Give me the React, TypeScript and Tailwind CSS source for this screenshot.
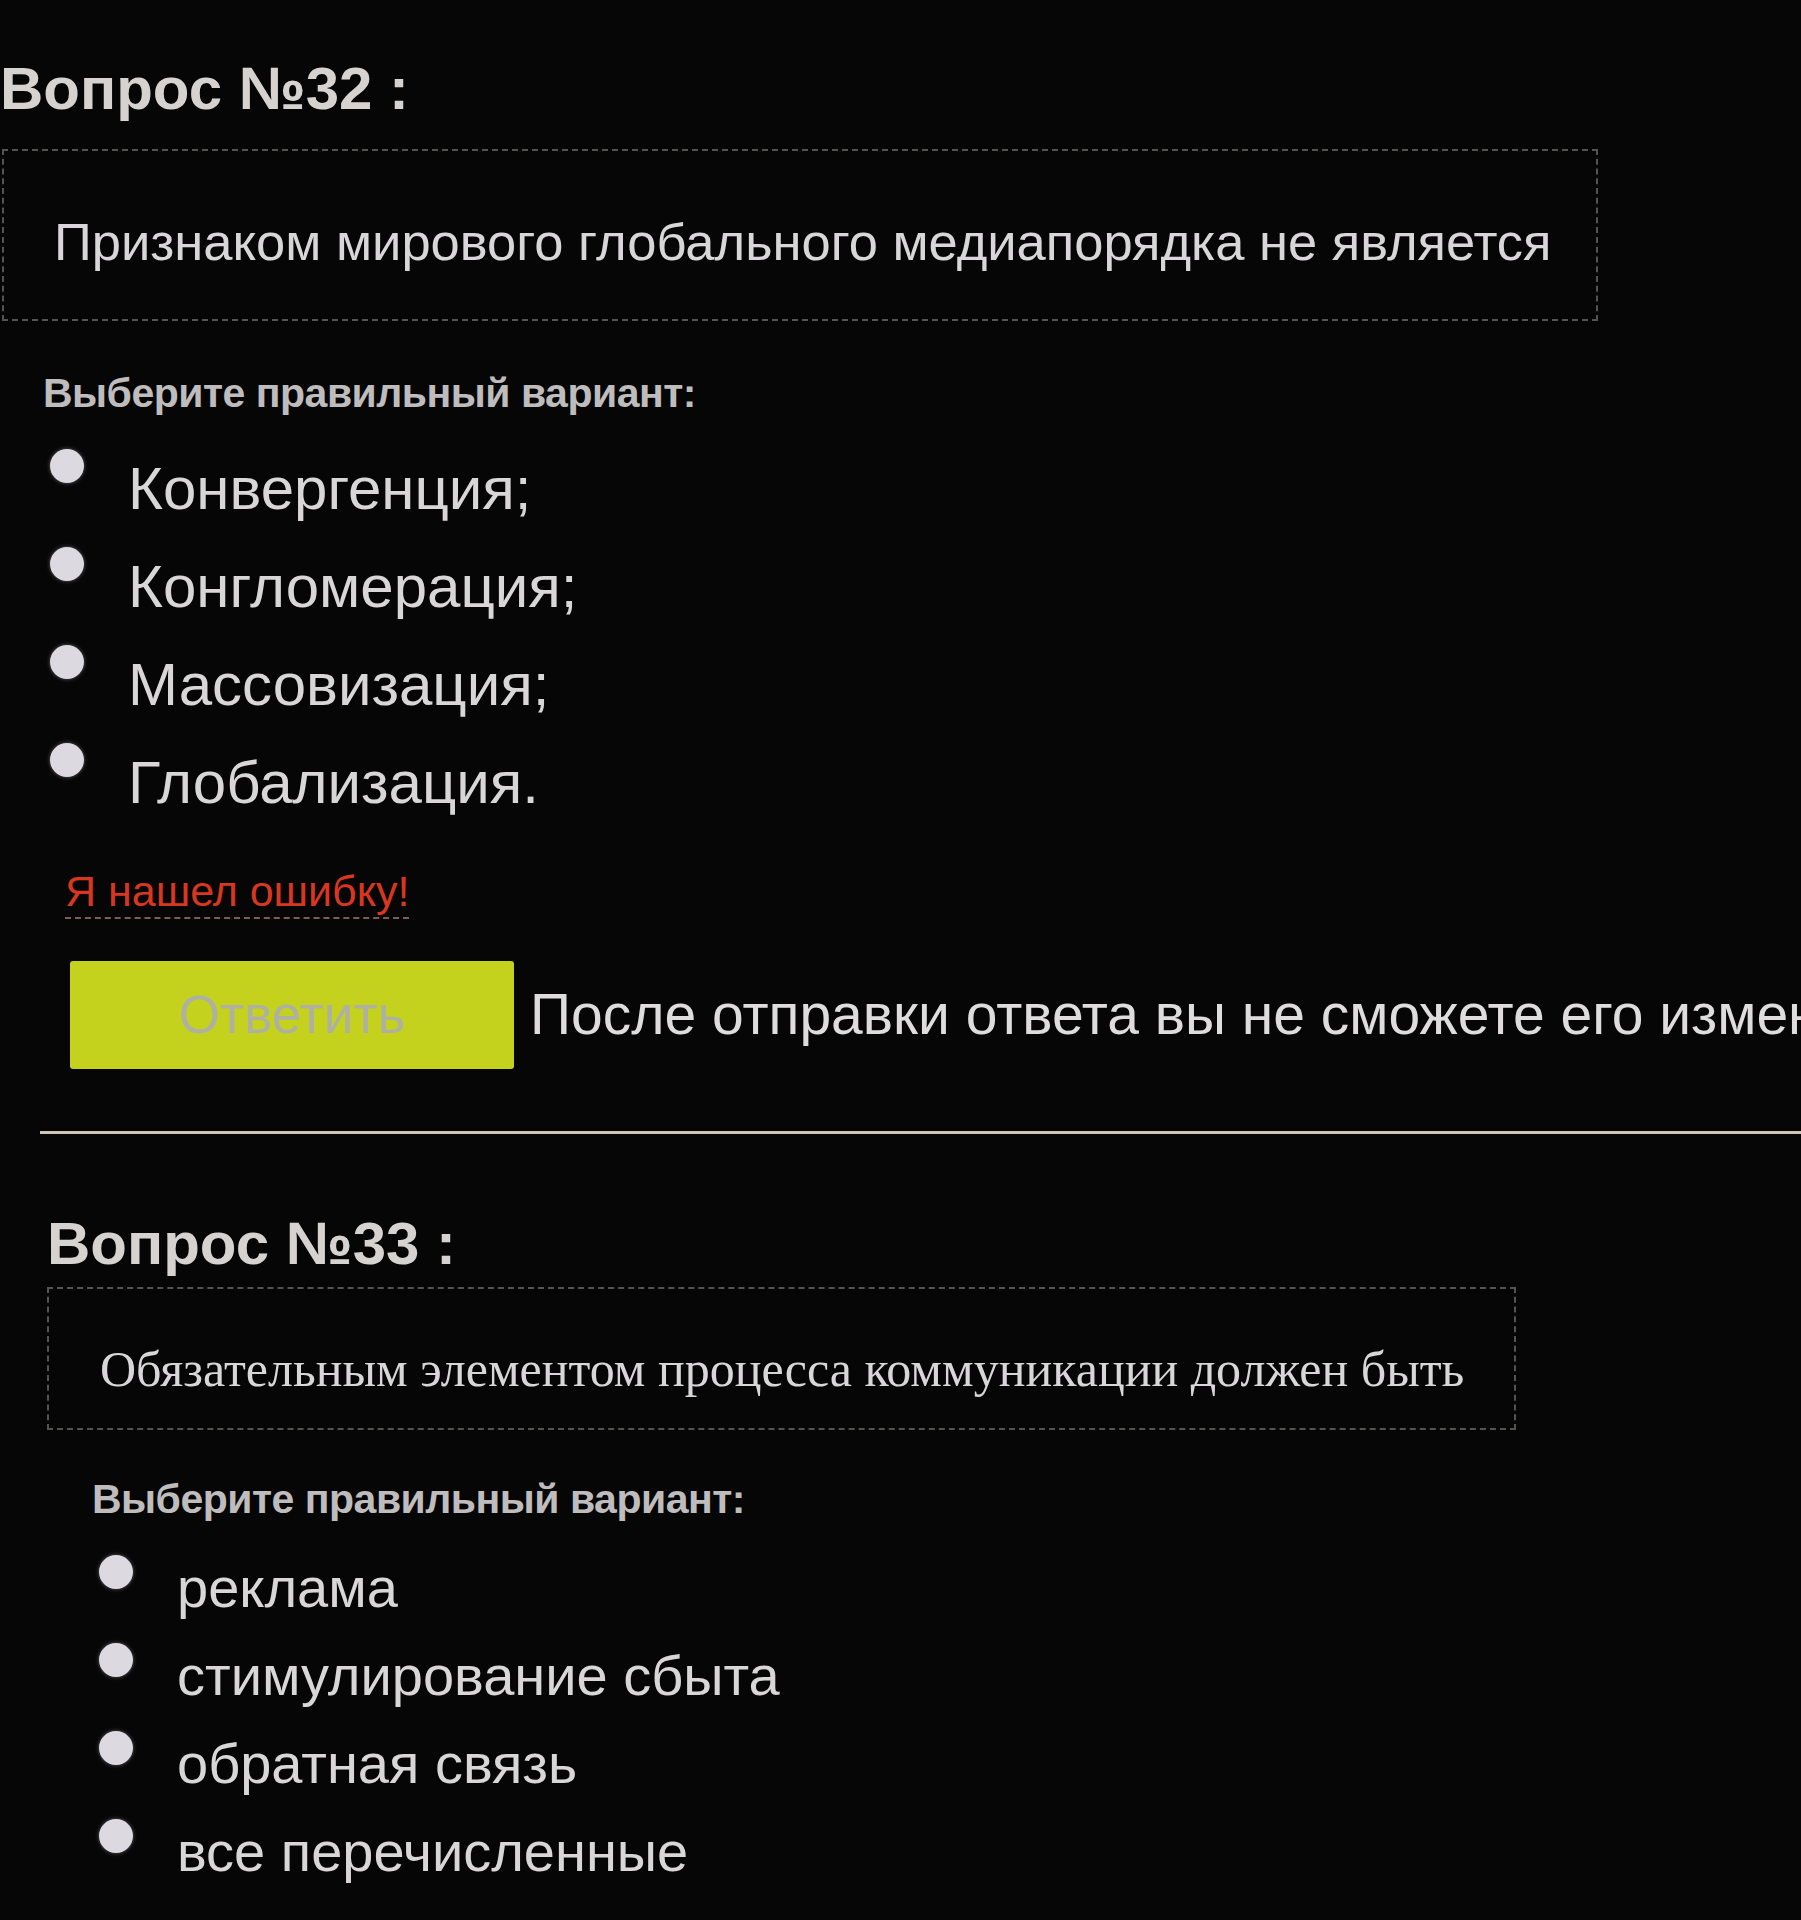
import { ReactNode } from 'react'

/**
 * Test page: one question per block, radio options, submit row
 */

interface QuestionBlockProps {
  number: number
  text: ReactNode
  options: string[]
  className?: string
  boxClassName: string
  boxTextClassName: string
  labelClassName: string
  listClassName: string
  rowClassName: string
  dotClassName: string
  optionClassName: string
  footer?: ReactNode
}

function RadioDot({ className }: { className: string }) {
  return (
    <span
      className={`block h-[34px] w-[34px] shrink-0 rounded-full bg-[#dcd9e0] shadow-[0_0_4px_rgba(220,217,224,0.4)] ${className}`}
    />
  )
}

function QuestionBlock({
  number,
  text,
  options,
  className,
  boxClassName,
  boxTextClassName,
  labelClassName,
  listClassName,
  rowClassName,
  dotClassName,
  optionClassName,
  footer
}: QuestionBlockProps) {
  return (
    <section className={className}>
      <h2 className="text-[60px] font-bold leading-[72px] text-[#d6d2cf] whitespace-nowrap">
        Вопрос №{number} :
      </h2>

      {/* Question text */}
      <div className={`border-2 border-dashed border-[#55534f] ${boxClassName}`}>
        <p className={`whitespace-nowrap text-[#d8d6d8] ${boxTextClassName}`}>{text}</p>
      </div>

      <p className={`ml-[43px] text-[41px] font-bold leading-[48px] tracking-[-0.5px] text-[#bebcbd] ${labelClassName}`}>
        Выберите правильный вариант:
      </p>

      <ul className={listClassName}>
        {options.map((opt) => (
          <li key={opt} className={`flex items-start ${rowClassName}`}>
            <RadioDot className={dotClassName} />
            <span className={`ml-[44px] whitespace-nowrap text-[#d8d6d6] ${optionClassName}`}>{opt}</span>
          </li>
        ))}
      </ul>

      {footer}
    </section>
  )
}

export default function App() {
  return (
    <div className="min-h-[1920px] w-full overflow-hidden bg-[#060606] font-['Liberation_Sans',Arial,sans-serif]">
      <QuestionBlock
        number={32}
        className="pt-[53px]"
        text="Признаком мирового глобального медиапорядка не является"
        boxClassName="ml-[2px] mt-[24px] h-[172px] w-[1596px] pl-[50px] pt-[61px]"
        boxTextClassName="text-[52.5px] leading-[60px]"
        labelClassName="mt-[48px]"
        listClassName="mt-[23px]"
        rowClassName="h-[98px] leading-[98px]"
        dotClassName="ml-[50px] mt-[9px]"
        optionClassName="text-[60px]"
        options={['Конвергенция;', 'Конгломерация;', 'Массовизация;', 'Глобализация.']}
        footer={
          <div className="ml-[65px]">
            <a
              href="#"
              className="mt-[33px] inline-block border-b-2 border-dashed border-[#7d5d55] text-[43px] leading-[52px] text-[#d8371f]"
            >
              Я нашел ошибку!
            </a>

            <div className="mt-[42px] ml-[5px] flex items-center gap-[16px]">
              <button className="h-[108px] w-[444px] shrink-0 rounded-[3px] bg-[#c4d21d] text-[53px] text-[#aeb0a4]">
                Ответить
              </button>
              <span className="whitespace-nowrap text-[57px] text-[#dedcdc]">
                После отправки ответа вы не сможете его изменить.
              </span>
            </div>
          </div>
        }
      />

      <hr className="ml-[40px] mt-[62px] h-[3px] border-0 bg-[#cdc5b5]" />

      <QuestionBlock
        number={33}
        className="ml-[47px] pt-[74px]"
        text="Обязательным элементом процесса коммуникации должен быть"
        boxClassName="mt-[7px] h-[143px] w-[1469px] pl-[51px] pt-[54px]"
        boxTextClassName="font-['Liberation_Serif','Times_New_Roman',serif] text-[50px] leading-[52px]"
        labelClassName="mt-[45px] ml-[45px]"
        listClassName="mt-[21px]"
        rowClassName="h-[88px] leading-[88px]"
        dotClassName="ml-[52px] mt-[11px]"
        optionClassName="text-[56px]"
        options={['реклама', 'стимулирование сбыта', 'обратная связь', 'все перечисленные']}
      />
    </div>
  )
}
